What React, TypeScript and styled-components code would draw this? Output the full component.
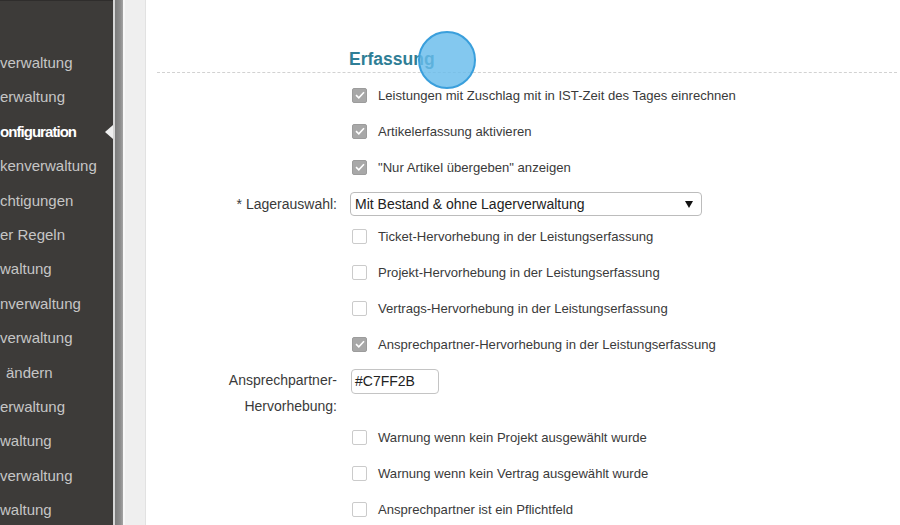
import styled, { createGlobalStyle } from 'styled-components'

const GlobalStyle = createGlobalStyle`
  html, body {
    margin: 0;
    padding: 0;
    background: #fff;
    font-family: 'Liberation Sans', Arial, sans-serif;
  }
`

const Page = styled.div`
  display: flex;
  width: 900px;
  height: 525px;
  overflow: hidden;
`

const Sidebar = styled.nav`
  flex: 0 0 113px;
  display: flex;
  flex-direction: column;
  background: #3d3b39;
  overflow: hidden;
`

const SidebarTop = styled.div`
  height: 5px;
  background: #353331;
  border-bottom: 1px solid #2f2d2c;
`

const MenuList = styled.ul`
  list-style: none;
  margin: 0;
  padding: 45px 0 0;
`

const MenuItem = styled.li<{ $active?: boolean; $shift?: number }>`
  position: relative;
  height: 34.4px;
  line-height: 34.4px;
  padding-left: ${(p) => p.$shift ?? 0}px;
  font-size: 15px;
  white-space: nowrap;
  color: ${(p) => (p.$active ? '#ffffff' : '#c6c6c6')};
  font-weight: ${(p) => (p.$active ? 'bold' : 'normal')};
  letter-spacing: ${(p) => (p.$active ? '-0.95px' : '0')};

  ${(p) =>
    p.$active &&
    `
    &::after {
      content: '';
      position: absolute;
      right: 0;
      top: 10px;
      border-top: 7px solid transparent;
      border-bottom: 7px solid transparent;
      border-right: 8px solid #efefef;
    }
  `}
`

const Divider = styled.div`
  display: flex;
  flex: 0 0 33px;
`

const DividerEdge = styled.div`
  width: 2px;
  background: #d6d6d6;
`

const DividerBar = styled.div`
  width: 8px;
  background: linear-gradient(to right, #7c7c7c, #8e8e8e 70%, #a4a4a4);
`

const DividerGutter = styled.div`
  flex: 1;
  background: #efefef;
  border-left: 2px solid #f7f7f7;
  border-right: 1px solid #e2e2e2;
`

const Main = styled.main`
  position: relative;
  flex: 1;
  background: #fff;
  color: #333;
  font-size: 13px;
`

const SectionHeader = styled.div`
  margin: 0 3px 0 11px;
  padding: 46px 0 0 192px;
  border-bottom: 1px dashed #d2d2d2;
`

const SectionTitle = styled.h2`
  margin: 0;
  font-size: 17.5px;
  line-height: 26px;
  font-weight: bold;
  color: #2f7e96;
`

const Form = styled.div`
  display: grid;
  grid-template-columns: 191px 1fr;
  column-gap: 13px;
  padding-top: 4px;
`

const Label = styled.div<{ $top?: number }>`
  text-align: right;
  padding-top: ${(p) => p.$top ?? 0}px;
  font-size: 14px;
  line-height: 26px;
  color: #3a3a3a;
`

const Field = styled.div<{ $height: number }>`
  display: flex;
  align-items: flex-start;
  height: ${(p) => p.$height}px;
`

const CheckRow = styled.label`
  grid-column: 2;
  display: flex;
  align-items: center;
  gap: 11px;
  height: 36px;
  padding-left: 2px;
  font-size: 13.1px;
  color: #3a3a3a;
`

const Box = styled.span<{ $checked: boolean }>`
  display: flex;
  align-items: center;
  justify-content: center;
  box-sizing: border-box;
  width: 15px;
  height: 15px;
  border-radius: 2px;
  border: 1px solid ${(p) => (p.$checked ? '#9c9c9c' : '#cbcbcb')};
  background: ${(p) => (p.$checked ? '#a8a8a8' : '#fff')};
`

const SelectBox = styled.div`
  display: flex;
  align-items: center;
  justify-content: space-between;
  box-sizing: border-box;
  width: 352px;
  height: 24px;
  margin-top: 7px;
  padding: 0 8px 0 4px;
  border: 1px solid #bcbcbc;
  border-radius: 4px;
  font-size: 14px;
  color: #222;
  background: #fff;
`

const TextInput = styled.div`
  box-sizing: border-box;
  width: 88px;
  height: 25px;
  margin: 7px 0 0 1px;
  padding: 0 3px;
  line-height: 23px;
  font-size: 14px;
  border: 1px solid #c4c4c4;
  border-radius: 4px;
  color: #222;
`

const Cursor = styled.div`
  position: absolute;
  left: 272px;
  top: 31px;
  width: 54px;
  height: 54px;
  border-radius: 50%;
  background: rgba(104, 188, 236, 0.82);
  border: 2px solid #3a9fdc;
`

const menu = [
  { text: 'verwaltung' },
  { text: 'erwaltung' },
  { text: 'onfiguration', active: true },
  { text: 'kenverwaltung' },
  { text: 'chtigungen' },
  { text: 'er Regeln' },
  { text: 'waltung' },
  { text: 'nverwaltung' },
  { text: 'verwaltung' },
  { text: 'ändern', shift: 6 },
  { text: 'erwaltung' },
  { text: 'waltung' },
  { text: 'verwaltung' },
  { text: 'waltung' },
]

const Check = ({ checked }: { checked: boolean }) => (
  <Box $checked={checked}>
    {checked && (
      <svg width="10" height="8" viewBox="0 0 10 8">
        <path
          d="M1 4.2 L3.8 6.8 L9 1.2"
          fill="none"
          stroke="#fff"
          strokeWidth="1.6"
        />
      </svg>
    )}
  </Box>
)

const CheckField = ({ checked, text }: { checked: boolean; text: string }) => (
  <CheckRow>
    <Check checked={checked} />
    {text}
  </CheckRow>
)

export default function App() {
  return (
    <Page>
      <GlobalStyle />
      <Sidebar>
        <SidebarTop />
        <MenuList>
          {menu.map((m, i) => (
            <MenuItem key={i} $active={m.active} $shift={m.shift}>
              {m.text}
            </MenuItem>
          ))}
        </MenuList>
      </Sidebar>
      <Divider>
        <DividerEdge />
        <DividerBar />
        <DividerGutter />
      </Divider>
      <Main>
        <SectionHeader>
          <SectionTitle>Erfassung</SectionTitle>
        </SectionHeader>
        <Form>
          <CheckField
            checked
            text="Leistungen mit Zuschlag mit in IST-Zeit des Tages einrechnen"
          />
          <CheckField checked text="Artikelerfassung aktivieren" />
          <CheckField checked text={'"Nur Artikel übergeben" anzeigen'} />

          <Label $top={6}>* Lagerauswahl:</Label>
          <Field $height={33}>
            <SelectBox>
              <span>Mit Bestand &amp; ohne Lagerverwaltung</span>
              <svg width="8" height="7" viewBox="0 0 8 7">
                <path d="M0 0 H8 L4 7 Z" fill="#111" />
              </svg>
            </SelectBox>
          </Field>

          <CheckField
            checked={false}
            text="Ticket-Hervorhebung in der Leistungserfassung"
          />
          <CheckField
            checked={false}
            text="Projekt-Hervorhebung in der Leistungserfassung"
          />
          <CheckField
            checked={false}
            text="Vertrags-Hervorhebung in der Leistungserfassung"
          />
          <CheckField
            checked
            text="Ansprechpartner-Hervorhebung in der Leistungserfassung"
          />

          <Label $top={5}>
            Ansprechpartner-
            <br />
            Hervorhebung:
          </Label>
          <Field $height={57}>
            <TextInput>#C7FF2B</TextInput>
          </Field>

          <CheckField
            checked={false}
            text="Warnung wenn kein Projekt ausgewählt wurde"
          />
          <CheckField
            checked={false}
            text="Warnung wenn kein Vertrag ausgewählt wurde"
          />
          <CheckField
            checked={false}
            text="Ansprechpartner ist ein Pflichtfeld"
          />
        </Form>
        <Cursor />
      </Main>
    </Page>
  )
}
